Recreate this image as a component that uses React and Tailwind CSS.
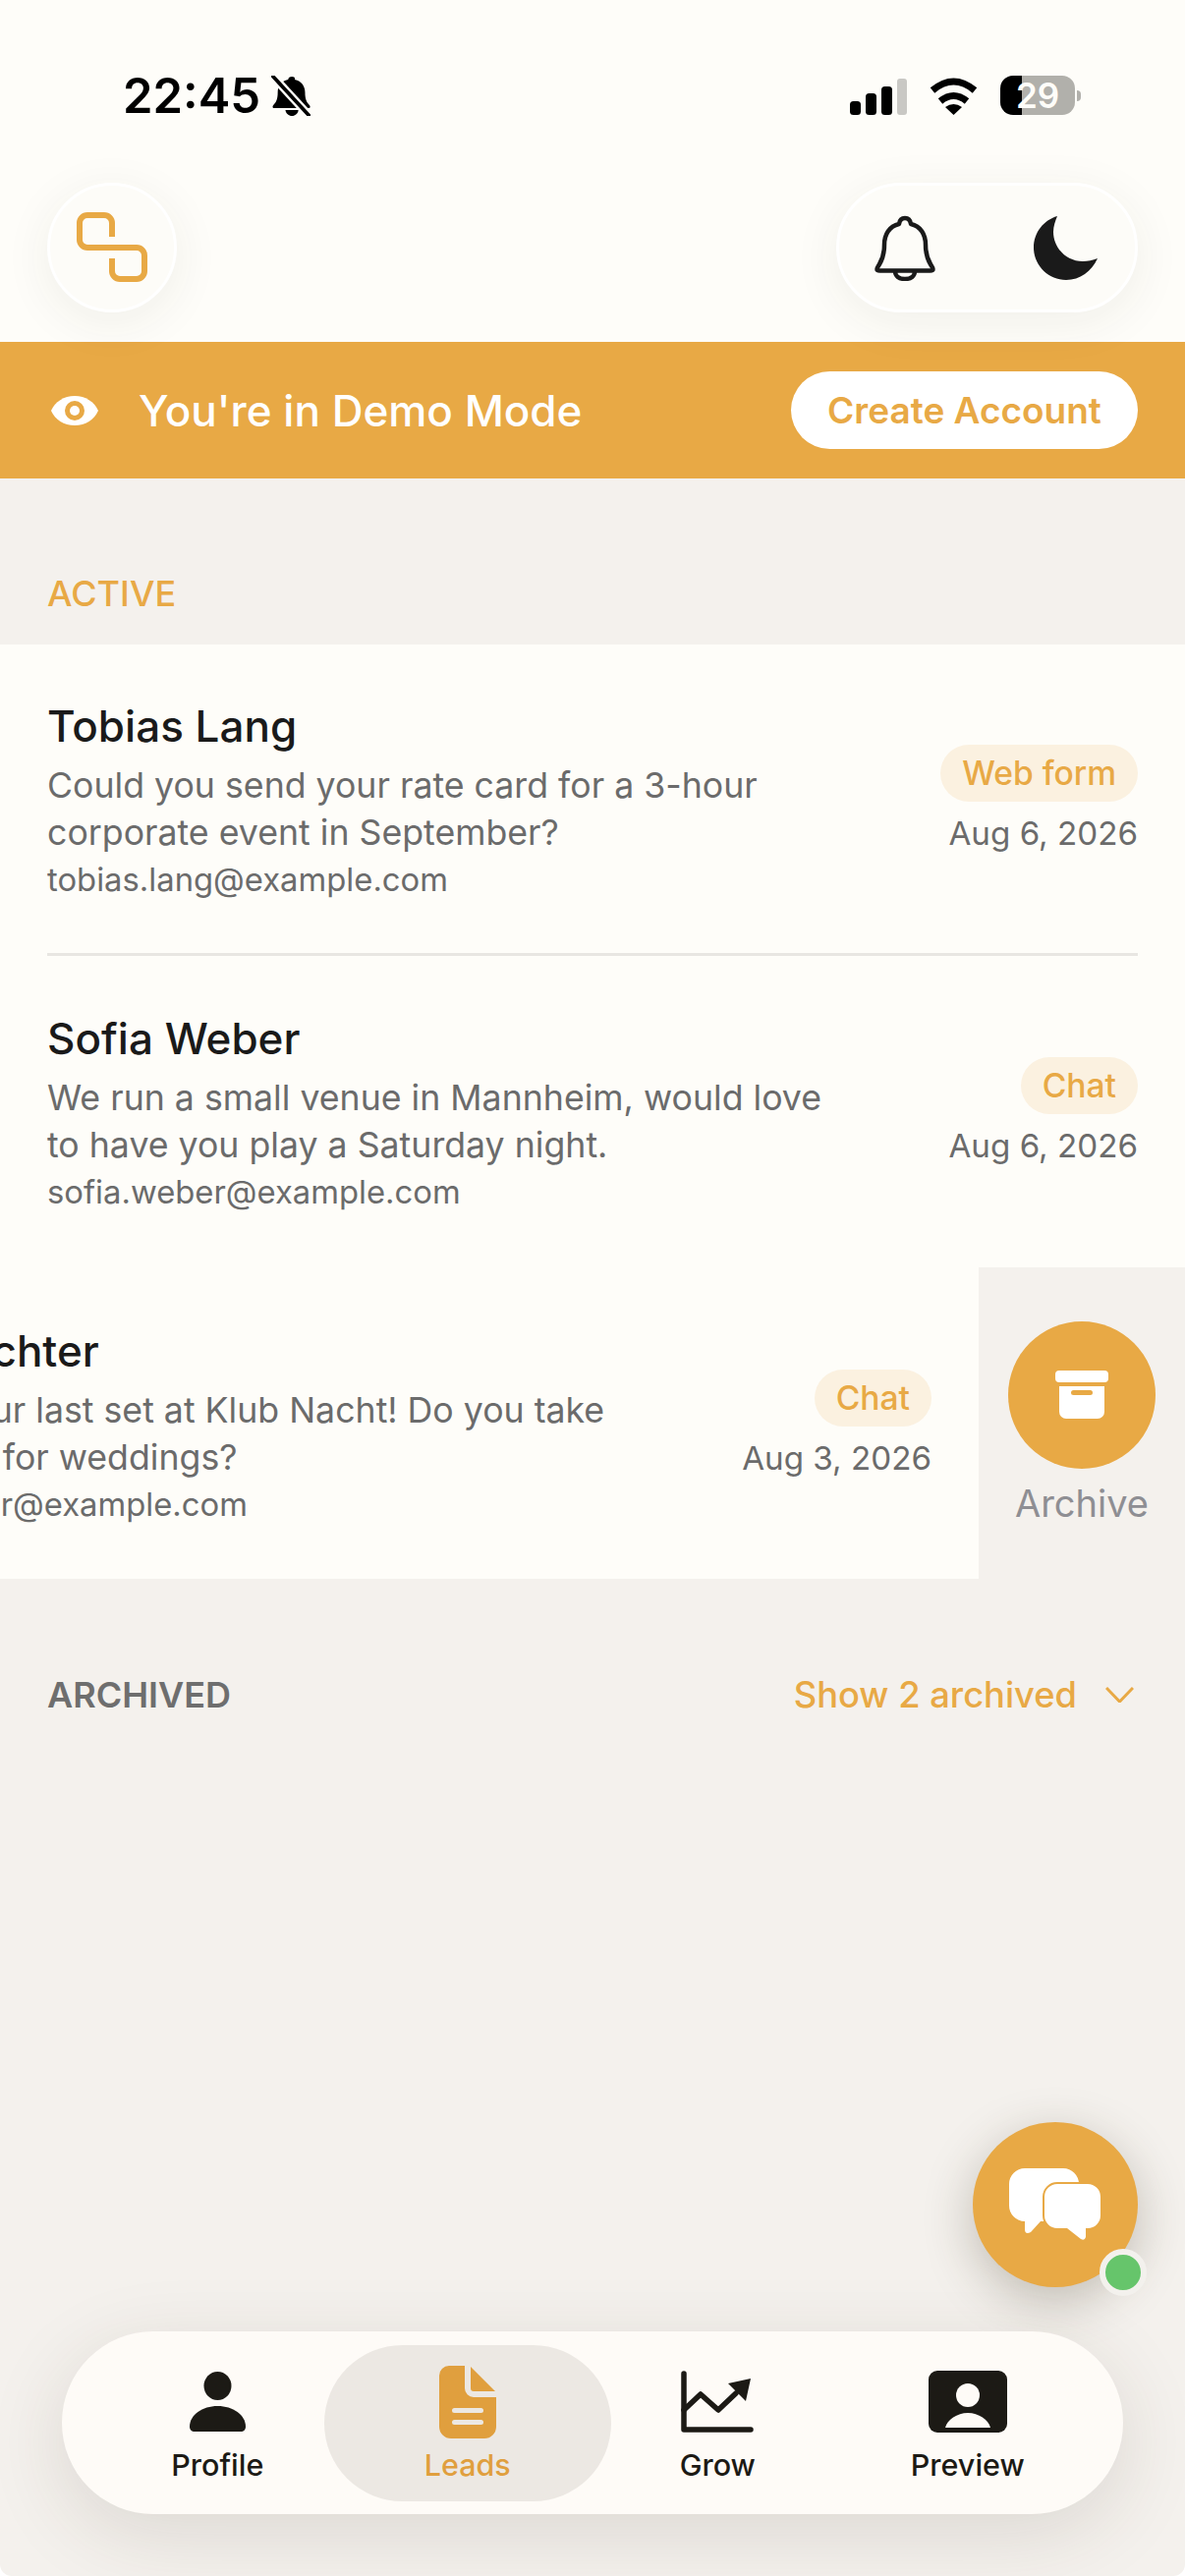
import React from 'react';

const FONT = "font-['Inter','Noto_Sans',sans-serif]";

function SilentBell() {
  return (
    <svg width="40" height="41" viewBox="2 0 36 41" preserveAspectRatio="none">
      <path d="M21 1c-2 0-3.300 1.300-3.500 3C11 5.500 8 11 8 17c0 7-1.500 10-4 13-1 1.300-1 3 1 3h31c2 0 2-1.700 1-3-2.500-3-4-6-4-13 0-6-3-11.500-9.500-13C24.300 2.300 23 1 21 1z" fill="#000" />
      <path d="M15 35c.5 3.500 3 6 6 6s5.500-2.500 6-6z" fill="#000" />
      <path d="M3 0l34 41" stroke="#fefdf9" strokeWidth="8" />
      <path d="M3 0l34 41" stroke="#000" strokeWidth="3.500" strokeLinecap="round" />
    </svg>
  );
}

function Signal() {
  return (
    <svg width="58" height="37" viewBox="0 0 58 37">
      <rect x="0" y="23" width="11" height="14" rx="3.500" fill="#000" />
      <rect x="16" y="15" width="11" height="22" rx="3.500" fill="#000" />
      <rect x="32" y="8" width="11" height="29" rx="3.500" fill="#000" />
      <rect x="48" y="0" width="10" height="37" rx="3" fill="#c9c8c4" />
    </svg>
  );
}

function Wifi() {
  return (
    <svg width="49" height="38" viewBox="0 0 49 38" fill="none">
      <path d="M3 13Q24.500-5 46 13" stroke="#000" strokeWidth="7" />
      <path d="M11 24Q24.500 13 38 24" stroke="#000" strokeWidth="7" />
      <path d="M16 30Q24.500 24 33 30L24.500 38z" fill="#000" />
    </svg>
  );
}

function Battery() {
  return (
    <div className="flex items-center gap-[2px]">
      <div className="relative flex h-[40px] w-[76px] overflow-hidden rounded-[13px]">
        <div className="w-[22px] bg-black" />
        <div className="flex-1 bg-[#b1b0ab]" />
        <span className="absolute inset-0 flex items-center justify-center text-[35px] leading-none font-semibold text-[#fefdf9]">29</span>
      </div>
      <div className="h-[11px] w-[4px] rounded-r-full bg-[#b1b0ab]" />
    </div>
  );
}

function StatusBar() {
  return (
    <div className="flex h-[40px] items-center justify-between pr-[106px] pl-[125px]">
      <div className="flex items-center gap-[11px]">
        <span className="text-[49px] leading-none font-semibold text-black">22:45</span>
        <SilentBell />
      </div>
      <div className="flex items-end gap-[23px]">
        <Signal />
        <Wifi />
        <Battery />
      </div>
    </div>
  );
}

function Logo() {
  return (
    <svg width="78" height="78" viewBox="0 0 78 78" fill="none" stroke="#e8a945" strokeWidth="6">
      <path d="M39 28V14a8 8 0 0 0-8-8H14a8 8 0 0 0-8 8V31a8 8 0 0 0 8 8H64a8 8 0 0 1 8 8V63a8 8 0 0 1-8 8H47a8 8 0 0 1-8-8V50" />
    </svg>
  );
}

function BellIcon() {
  return (
    <svg width="62" height="67" viewBox="0 0 62 67" fill="none" stroke="#1a1a1a" strokeWidth="4.500" strokeLinejoin="round">
      <path d="M31 3c-3.500 0-5.500 2.500-6 6C15 11 10 20 10 30c0 10-2 15-5 20-1.500 2.500-2.500 3.500-2.500 5 0 1 1 1.500 3 1.500h51c2 0 3-.5 3-1.500 0-1.500-1-2.500-2.500-5-3-5-5-10-5-20C52 20 47 11 37 9c-.5-3.500-2.500-6-6-6z" />
      <path d="M21 57c0 5 4 8 10 8s10-3 10-8" />
    </svg>
  );
}

function MoonIcon() {
  return (
    <svg width="65" height="65" viewBox="0 0 65 65">
      <path d="M24 0C10 4 0 17 0 32c0 18 15 33 33 33 14 0 26-9 32-22-5 2-10 3-15 3-17 0-30-14-30-30 0-6 2-11 4-16z" fill="#1a1a1a" />
    </svg>
  );
}

function EyeIcon() {
  return (
    <svg width="48" height="30" viewBox="0 0 48 30">
      <path d="M24 0C13 0 4 6 0 15c4 9 13 15 24 15s20-6 24-15C44 6 35 0 24 0z" fill="#fff" />
      <circle cx="24" cy="15" r="10" fill="#e8a945" />
      <circle cx="24" cy="15" r="5" fill="#fff" />
    </svg>
  );
}

function Header() {
  return (
    <header className="bg-[#fefdf9] pt-[77px]">
      <StatusBar />
      <div className="flex items-center justify-between px-[48px] pt-[69px] pb-[30px]">
        <div className="flex h-[132px] w-[132px] items-center justify-center rounded-full border-[3px] border-white bg-[#fdfcf8] shadow-[0_10px_50px_rgba(60,50,30,0.07)]">
          <Logo />
        </div>
        <div className="flex h-[132px] w-[307px] items-center gap-[100px] rounded-full border-[3px] border-white bg-[#fdfcf8] pl-[36px] shadow-[0_10px_50px_rgba(60,50,30,0.07)]">
          <BellIcon />
          <MoonIcon />
        </div>
      </div>
    </header>
  );
}

function DemoBanner() {
  return (
    <div className="flex h-[139px] items-center justify-between bg-[#e8a945] pr-[48px] pl-[52px]">
      <div className="flex items-center gap-[41px]">
        <EyeIcon />
        <span className="text-[44px] leading-none font-medium text-white">You're in Demo Mode</span>
      </div>
      <button className="flex h-[79px] w-[353px] items-center justify-center rounded-full bg-white text-[37px] font-semibold text-[#e8a945]">
        Create Account
      </button>
    </div>
  );
}

function LeadBody({ name, lines, email, tag, date }) {
  return (
    <div className="flex w-full items-center justify-between">
      <div className="w-[860px]">
        <div className="text-[44px] leading-[52px] font-medium text-[#1a1a1a]">{name}</div>
        <div className="mt-[10px] text-[35.700px] leading-[48px] text-[#6b6b6b]">
          {lines[0]}
          <br />
          {lines[1]}
        </div>
        <div className="text-[32.800px] leading-[48px] text-[#6b6b6b]">{email}</div>
      </div>
      <div className="mb-[4px] flex flex-col items-end gap-[10px]">
        <span className="flex h-[58px] items-center rounded-full bg-[#fbf1e0] px-[22px] text-[33.600px] font-medium text-[#e8a945]">{tag}</span>
        <span className="text-[33.200px] leading-[44px] text-[#6b6b6b]">{date}</span>
      </div>
    </div>
  );
}

function ArchiveIcon() {
  return (
    <svg width="54" height="50" viewBox="0 0 54 50">
      <rect x="0" y="0" width="54" height="12" rx="4" fill="#fff" />
      <path d="M4 16h46v26a7 7 0 0 1-7 7H11a7 7 0 0 1-7-7z" fill="#fff" />
      <rect x="16" y="20" width="22" height="5" rx="2.500" fill="#e8a945" />
    </svg>
  );
}

function LeadList() {
  return (
    <div>
      <div className="bg-[#fefdf9] px-[48px]">
        <div className="border-b-[3px] border-[#e8e6e2] pt-[57px] pb-[51px]">
          <LeadBody
            name="Tobias Lang"
            lines={['Could you send your rate card for a 3-hour', 'corporate event in September?']}
            email="tobias.lang@example.com"
            tag="Web form"
            date="Aug 6, 2026"
          />
        </div>
        <div className="pt-[58px] pb-[53px]">
          <LeadBody
            name="Sofia Weber"
            lines={['We run a small venue in Mannheim, would love', 'to have you play a Saturday night.']}
            email="sofia.weber@example.com"
            tag="Chat"
            date="Aug 6, 2026"
          />
        </div>
      </div>
      {/* swiped row, archive action sits in the space it leaves */}
      <div className="flex w-full overflow-hidden">
        <div className="-ml-[210px] w-[1206px] shrink-0 bg-[#fefdf9] px-[48px] pt-[59px] pb-[52px]">
          <LeadBody
            name="Lena Richter"
            lines={['Loved your last set at Klub Nacht! Do you take', 'bookings for weddings?']}
            email="lena.richter@example.com"
            tag="Chat"
            date="Aug 3, 2026"
          />
        </div>
        <div className="flex w-[210px] shrink-0 flex-col items-center justify-center gap-[13px]">
          <div className="flex h-[150px] w-[150px] items-center justify-center rounded-full bg-[#e8a945]">
            <ArchiveIcon />
          </div>
          <span className="text-[38px] leading-[44px] text-[#8e8e93]">Archive</span>
        </div>
      </div>
    </div>
  );
}

function ArchivedRow() {
  return (
    <div className="flex items-center justify-between px-[48px] pt-[96px]">
      <span className="text-[36px] leading-[44px] font-semibold text-[#6e6e6e]">ARCHIVED</span>
      <div className="flex items-center gap-[29px] pr-[4px]">
        <span className="text-[36.300px] leading-[44px] font-medium text-[#e8a945]">Show 2 archived</span>
        <svg width="29" height="16" viewBox="0 0 29 16" fill="none" stroke="#e8a945" strokeWidth="3">
          <path d="M1 1l13.500 14L28 1" />
        </svg>
      </div>
    </div>
  );
}

function ChatFab() {
  return (
    <div className="absolute top-[2160px] left-[990px] flex h-[168px] w-[168px] items-center justify-center rounded-full bg-[#e8a945] shadow-[0_14px_50px_rgba(60,50,30,0.28)]">
      <svg width="94" height="74" viewBox="0 0 94 74">
        <path d="M16 0h39a16 16 0 0 1 16 16v24a16 16 0 0 1-16 14H32L22 65q-6 3-6-3v-8A16 16 0 0 1 0 38V16A16 16 0 0 1 16 0z" fill="#fff" />
        <path d="M49 16h31a13 13 0 0 1 13 13v19a13 13 0 0 1-13 13h-2v9q-1 4-5 2L59 61h-10a13 13 0 0 1-13-13V29a13 13 0 0 1 13-13z" fill="#fff" stroke="#e8a945" strokeWidth="4" paintOrder="stroke" />
      </svg>
      <span className="absolute top-[129px] left-[129px] h-[48px] w-[48px] rounded-full border-[6px] border-[#f3f1ed] bg-[#66c56b]" />
    </div>
  );
}

function ProfileIcon() {
  return (
    <svg width="57" height="61" viewBox="0 0 57 61" fill="#1c1a15">
      <ellipse cx="28.500" cy="14.500" rx="14" ry="14.500" />
      <path d="M28.500 35C13 35 0 44 0 56c0 3 2 5 5 5h47c3 0 5-2 5-5 0-12-13-21-28.500-21z" />
    </svg>
  );
}

function LeadsIcon() {
  return (
    <svg width="58" height="74" viewBox="0 0 58 74" fill="#e09f3e">
      <path d="M10 0H26V23a9 9 0 0 0 9 9H58V62a12 12 0 0 1-12 12H12A12 12 0 0 1 0 62V10A10 10 0 0 1 10 0z" />
      <path d="M32 1L57 26H35a3 3 0 0 1-3-3z" />
      <rect x="13" y="43" width="32" height="5" rx="2.500" fill="#ece8e3" />
      <rect x="13" y="55" width="32" height="5" rx="2.500" fill="#ece8e3" />
    </svg>
  );
}

function GrowIcon() {
  return (
    <svg width="74" height="63" viewBox="0 0 74 63" fill="none" stroke="#1c1a15" strokeWidth="5.500" strokeLinecap="round" strokeLinejoin="round">
      <path d="M3 3V60H71" />
      <path d="M3 40L20 24L38 40L56 23" />
      <path d="M48 13L71 8L66 31z" fill="#1c1a15" stroke="none" />
    </svg>
  );
}

function PreviewIcon() {
  return (
    <svg width="80" height="63" viewBox="0 0 80 63">
      <rect width="80" height="63" rx="9" fill="#1c1a15" />
      <circle cx="40" cy="25" r="12" fill="#fefbf7" />
      <path d="M17 58c2-8 12-15 23-15s21 7 23 15z" fill="#fefbf7" />
    </svg>
  );
}

const tabs = [
  { name: 'Profile', icon: <ProfileIcon /> },
  { name: 'Leads', icon: <LeadsIcon />, active: true },
  { name: 'Grow', icon: <GrowIcon /> },
  { name: 'Preview', icon: <PreviewIcon /> },
];

function BottomNav() {
  return (
    <nav className="absolute top-[2373px] left-[63px] grid h-[186px] w-[1080px] grid-cols-4 items-center rounded-full bg-[#fefbf7] px-[31px] shadow-[0_20px_80px_rgba(60,50,30,0.13)]">
      {tabs.map((tab) => (
        <div
          key={tab.name}
          className={
            tab.active
              ? '-mx-[19px] flex h-[159px] flex-col items-center justify-between rounded-full bg-[#ece8e3] pt-[21px] pb-[19px] text-[#e09f3e]'
              : 'flex h-[159px] flex-col items-center justify-between pt-[21px] pb-[19px] text-[#1c1a15]'
          }
        >
          <div className="flex h-[74px] items-center">{tab.icon}</div>
          <span className="text-[30.500px] leading-[36px] font-medium">{tab.name}</span>
        </div>
      ))}
    </nav>
  );
}

export default function App() {
  return (
    <div className={`relative h-[2622px] w-[1206px] overflow-hidden rounded-b-[12px] bg-[#f4f1ed] ${FONT}`}>
      <Header />
      <DemoBanner />
      <div className="px-[48px] pt-[94px] pb-[29px] text-[36px] leading-[46px] font-medium text-[#e8a945]">ACTIVE</div>
      <LeadList />
      <ArchivedRow />
      <ChatFab />
      <BottomNav />
    </div>
  );
}
